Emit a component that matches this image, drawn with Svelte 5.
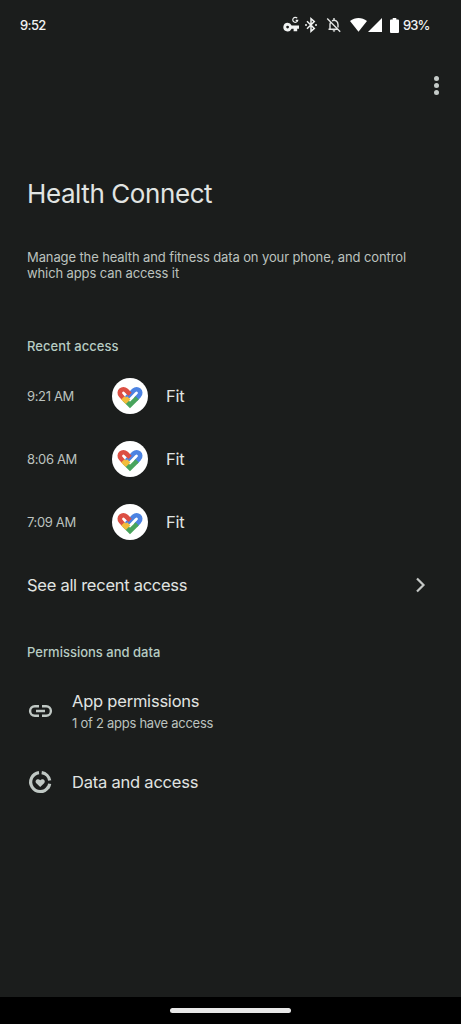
<script lang="ts">
	const recentAccess = [
		{ time: '9:21 AM', app: 'Fit' },
		{ time: '8:06 AM', app: 'Fit' },
		{ time: '7:09 AM', app: 'Fit' }
	];
</script>

<div class="screen">
	<header class="status">
		<span class="status__clock">9:52</span>
		<div class="status__icons">
			<svg class="status__vpn" width="18" height="18" viewBox="0 0 18 18">
				<path
					fill="#f1f3f2"
					fill-rule="evenodd"
					d="M4.6 6.8a4.3 4.3 0 1 0 4 6h2v2.4h3.6v-2.4H16V9.4H8.600a4.300 4.300 0 0 0-4-2.600zm0 2.900a1.400 1.400 0 1 1 0 2.800 1.400 1.400 0 0 1 0-2.800z"
				/>
				<path
					fill="none"
					stroke="#f1f3f2"
					stroke-width="1.2"
					d="M14.2 2.2a2.5 2.5 0 1 0 .5 2.2h-2"
				/>
			</svg>
			<svg class="status__bluetooth" width="14" height="16" viewBox="0 0 14 16">
				<path
					fill="none"
					stroke="#f1f3f2"
					stroke-width="1.5"
					d="M3 4.200l7.300 7.200L7 14.300V1.700l3.300 2.900L3 11.800"
				/>
				<circle cx="2" cy="8" r="1" fill="#f1f3f2" />
				<circle cx="12" cy="8" r="1" fill="#f1f3f2" />
			</svg>
			<svg class="status__bell" width="16" height="16" viewBox="0 0 16 16">
				<g fill="none" stroke="#e3e5e4" stroke-width="1.4">
					<path d="M4 12.2V7.5a4 4 0 0 1 .7-2.3M6 3.8c3-1.6 6 .5 6 3.7v3M2.5 12.2h9.8M1.2 1.5l13 13.2" />
					<path d="M8 1v2" />
				</g>
				<path fill="#e3e5e4" d="M6.6 13.3h2.8a1.4 1.4 0 0 1-2.8 0z" />
			</svg>
			<svg class="status__wifi" width="17" height="14" viewBox="0 0 17 14">
				<path fill="#fff" d="M0 3.1C5-1 12-1 17 3.1L8.5 13.8z" />
			</svg>
			<svg class="status__signal" width="14" height="14" viewBox="0 0 14 14">
				<path fill="#fff" d="M14 0v14H0z" />
			</svg>
			<svg class="status__battery" width="9" height="15" viewBox="0 0 9 15">
				<path
					fill="#fff"
					d="M2.7 0h3.6v1.5H8a1 1 0 0 1 1 1V14a1 1 0 0 1-1 1H1a1 1 0 0 1-1-1V2.5a1 1 0 0 1 1-1h1.7z"
				/>
			</svg>
			<span class="status__percent">93%</span>
		</div>
	</header>

	<div class="toolbar">
		<button class="menu" aria-label="More options">
			<span></span>
			<span></span>
			<span></span>
		</button>
	</div>

	<main class="content">
		<h1>Health Connect</h1>
		<p class="intro">
			Manage the health and fitness data on your phone, and control<br />which apps can access it
		</p>

		<h2 class="recent">Recent access</h2>
		{#each recentAccess as entry}
			<div class="entry">
				<span class="entry__time">{entry.time}</span>
				<span class="entry__logo">
					<svg width="36" height="36" viewBox="0 0 36 36">
						<g fill="none" stroke-width="4.6">
							<path stroke="#4c83e2" d="M14.6 19.8l7.200-7.300c3.600-3.300 8.700 1 5.300 5.100l-3.400 3.600" />
							<path stroke="#48a45c" d="M25.200 19.800L18 27l-5.700-5.700" />
							<path stroke="#dc4f43" d="M12.300 21.300l-3.400-3.700c-3.400-4.100 1.700-8.400 5.300-5.100l3.900 3.900" />
							<path stroke="#f2bd3c" d="M10.800 19.800l3 3 3-3" />
						</g>
					</svg>
				</span>
				<span class="entry__app">{entry.app}</span>
			</div>
		{/each}
		<div class="see-all">
			<span>See all recent access</span>
			<svg width="12" height="16" viewBox="0 0 12 16">
				<path fill="none" stroke="#c5c8c6" stroke-width="2.2" d="M2 1.5L8.5 8 2 14.5" />
			</svg>
		</div>

		<h2 class="permissions">Permissions and data</h2>
		<div class="item">
			<svg class="item__icon" width="26" height="26" viewBox="0 0 26 26">
				<path
					fill="none"
					stroke="#c0c8c4"
					stroke-width="2.4"
					d="M12 8.3H7.8a4.7 4.7 0 0 0 0 9.4H12M15 8.3h4.2a4.7 4.7 0 0 1 0 9.4H15M9 13h9"
				/>
			</svg>
			<div class="item__text">
				<span class="item__title">App permissions</span>
				<span class="item__summary">1 of 2 apps have access</span>
			</div>
		</div>
		<div class="item">
			<svg class="item__icon" width="26" height="26" viewBox="0 0 26 26">
				<g fill="none" stroke="#c0c8c4" stroke-width="3.2">
					<path d="M12 3.6a9.5 9.5 0 1 0 9.1 14.7" />
					<path d="M14.7 3.6a9.5 9.5 0 0 1 8 8M22.7 14.7a9.5 9.5 0 0 1-1.9 4.2" />
				</g>
				<path
					fill="#c0c8c4"
					d="M13.2 18l-3.9-3.8c-2.3-2.5 1.5-5.6 3.9-3 2.4-2.6 6.2.5 3.9 3z"
				/>
			</svg>
			<div class="item__text">
				<span class="item__title">Data and access</span>
			</div>
		</div>
	</main>

	<footer class="nav">
		<div class="nav__handle"></div>
	</footer>
</div>

<style>
	:global(body) {
		background: #1b1d1c;
	}

	.screen {
		display: flex;
		flex-direction: column;
		width: 461px;
		height: 1024px;
		overflow: hidden;
		background: #1b1d1c;
		color: #e1e4e2;
		font-family: Inter, Roboto, sans-serif;
	}

	svg {
		display: block;
		flex-shrink: 0;
	}

	.status {
		display: flex;
		justify-content: space-between;
		align-items: center;
		height: 50px;
		padding: 0 31px 0 20px;
		color: #f1f3f2;
		font-size: 13px;
		font-weight: 500;
	}

	.status__clock {
		letter-spacing: -0.6px;
	}

	.status__icons {
		display: flex;
		align-items: center;
	}

	.status__vpn {
		margin-right: 3px;
	}

	.status__bluetooth {
		margin-right: 8px;
	}

	.status__bell {
		margin-right: 8px;
	}

	.status__wifi {
		margin-right: 1px;
	}

	.status__signal {
		margin-right: 8px;
	}

	.status__battery {
		margin-right: 4px;
	}

	.status__percent {
		width: 27px;
		letter-spacing: -0.9px;
	}

	.toolbar {
		display: flex;
		justify-content: flex-end;
		align-items: center;
		height: 71px;
		padding-right: 22px;
	}

	.menu {
		display: flex;
		flex-direction: column;
		gap: 2px;
		padding: 0;
		border: 0;
		background: none;
	}

	.menu span {
		width: 5px;
		height: 5px;
		border-radius: 50%;
		background: #c5cbc8;
	}

	.content {
		flex: 1;
		padding: 53px 27px 0;
	}

	h1,
	h2,
	p {
		margin: 0;
	}

	h1 {
		height: 40px;
		font-size: 26px;
		font-weight: 400;
		letter-spacing: -0.42px;
		line-height: 40px;
	}

	.intro {
		height: 33px;
		margin-top: 35px;
		color: #bcc2bf;
		font-size: 13px;
		letter-spacing: -0.11px;
		line-height: 16px;
		white-space: nowrap;
	}

	h2 {
		height: 20px;
		color: #b7ccc3;
		font-size: 13px;
		font-weight: 500;
		line-height: 20px;
	}

	.recent {
		margin: 54px 0 9px;
		letter-spacing: 0.07px;
	}

	.entry,
	.see-all {
		display: flex;
		align-items: center;
		height: 62.8px;
		font-size: 16.5px;
		letter-spacing: -0.27px;
	}

	.entry__time {
		width: 85px;
		color: #bcc2bf;
		font-size: 13px;
		letter-spacing: -0.35px;
	}

	.entry__logo {
		width: 36px;
		height: 36px;
		margin-right: 18px;
		border-radius: 50%;
		background: #fff;
	}

	.see-all {
		justify-content: space-between;
		padding-right: 7px;
	}

	.permissions {
		margin: 26px 0 13px;
	}

	.item {
		display: flex;
		align-items: center;
		height: 71px;
	}

	.item__icon {
		margin-right: 19px;
	}

	.item__text {
		display: flex;
		flex-direction: column;
	}

	.item__title {
		font-size: 16.5px;
		letter-spacing: -0.22px;
		line-height: 24px;
	}

	.item__summary {
		color: #bcc2bf;
		font-size: 13px;
		letter-spacing: -0.26px;
		line-height: 20px;
	}

	.nav {
		display: flex;
		justify-content: center;
		align-items: center;
		height: 27px;
		background: #000;
	}

	.nav__handle {
		width: 121px;
		height: 5px;
		border-radius: 3px;
		background: #e8e8e8;
	}
</style>
